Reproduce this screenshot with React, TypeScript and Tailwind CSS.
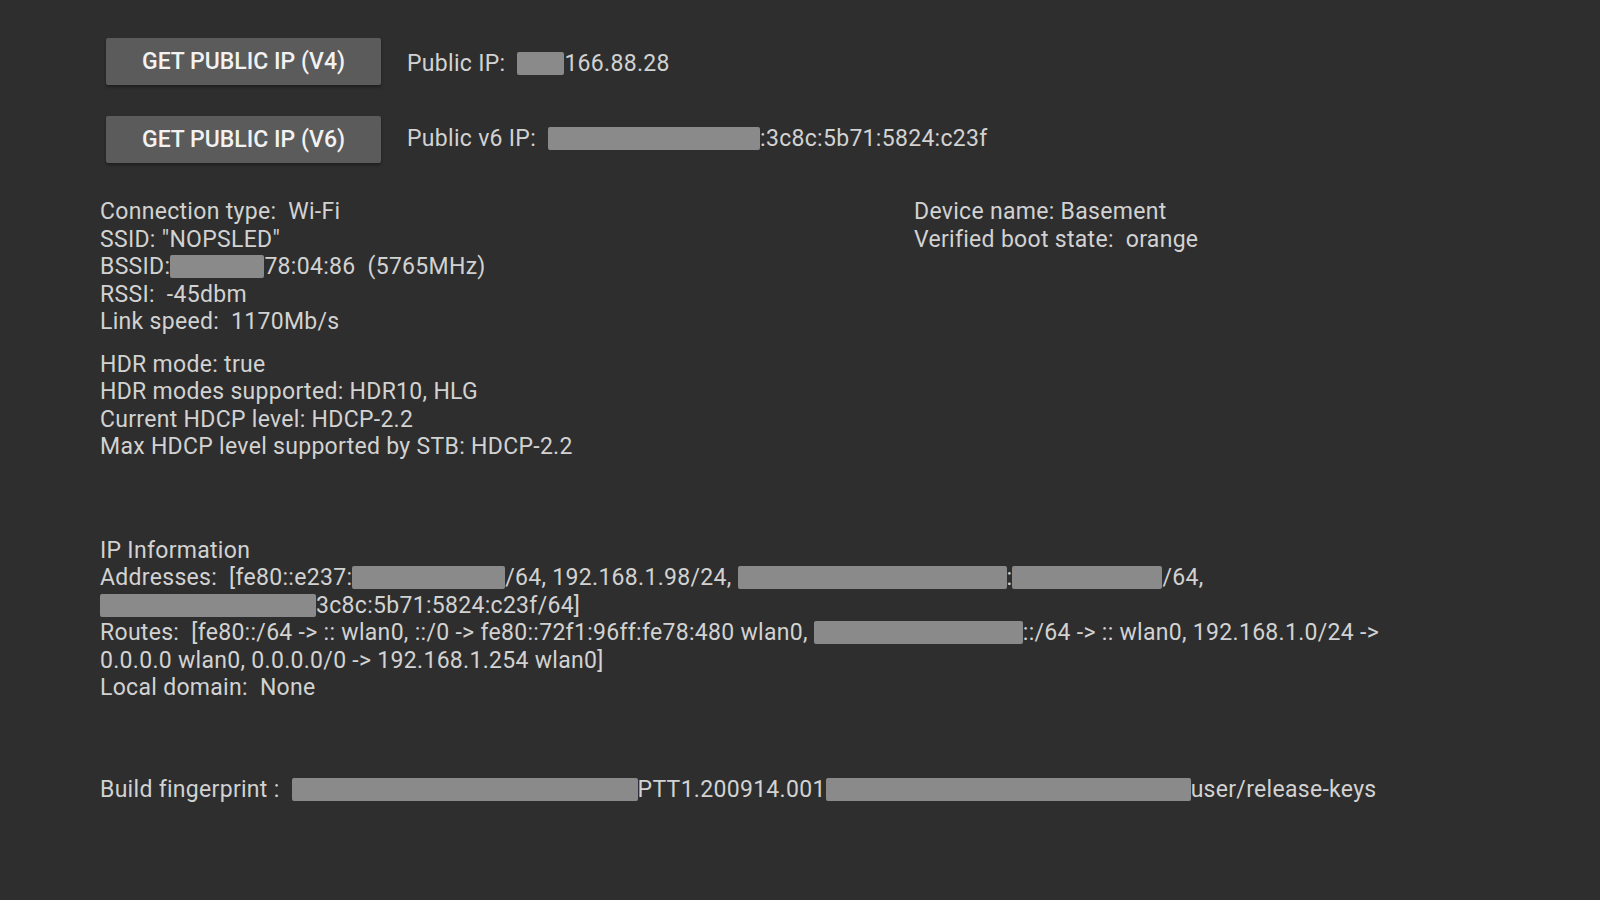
const font = { fontFamily: 'Roboto, "Liberation Sans", sans-serif' };

function Blank({ w }: { w: number }) {
  return (
    <span
      className="inline-block h-[23px] rounded-[2px] bg-[#8a8a8a] align-middle"
      style={{ width: w }}
    />
  );
}

function IpButton({ label }: { label: string }) {
  return (
    <button className="ml-[6px] h-[47px] w-[275px] shrink-0 rounded-[2px] bg-[#5b5b5b] text-[23px] font-medium tracking-normal text-[#f2f2f2] shadow-[0_2px_3px_rgba(0,0,0,0.35)]">
      {label}
    </button>
  );
}

export default function App() {
  return (
    <div
      className="min-h-[900px] w-full bg-[#2e2e2e] pl-[100px] pt-[38px] text-[23px] leading-[27.5px] tracking-[0.3px] text-[#d2d2d2]"
      style={font}
    >
      {/* public ip buttons */}
      <div className="flex flex-col gap-[31px]">
        <div className="flex items-center gap-[26px]">
          <IpButton label="GET PUBLIC IP (V4)" />
          <div className="mt-[4px] flex items-center whitespace-pre">
            <span>Public IP:  </span>
            <Blank w={47} />
            <span>166.88.28</span>
          </div>
        </div>
        <div className="flex items-start gap-[26px]">
          <IpButton label="GET PUBLIC IP (V6)" />
          <div className="mt-[9px] flex items-center whitespace-pre">
            <span>Public v6 IP:  </span>
            <Blank w={212} />
            <span>:3c8c:5b71:5824:c23f</span>
          </div>
        </div>
      </div>

      {/* connection / device */}
      <div className="mt-[35px] grid grid-cols-[814px_1fr] whitespace-pre">
        <div>
          <div>Connection type:  Wi-Fi</div>
          <div>SSID: "NOPSLED"</div>
          <div className="flex items-center">
            <span>BSSID:</span>
            <Blank w={94} />
            <span>78:04:86  (5765MHz)</span>
          </div>
          <div>RSSI:  -45dbm</div>
          <div>Link speed:  1170Mb/s</div>
          <div className="mt-[15px]">
            <div>HDR mode: true</div>
            <div>HDR modes supported: HDR10, HLG</div>
            <div>Current HDCP level: HDCP-2.2</div>
            <div>Max HDCP level supported by STB: HDCP-2.2</div>
          </div>
        </div>
        <div>
          <div>Device name: Basement</div>
          <div>Verified boot state:  orange</div>
        </div>
      </div>

      {/* ip information */}
      <div className="mt-[76px] whitespace-pre">
        <div>IP Information</div>
        <div className="flex items-center">
          <span>Addresses:  [fe80::e237:</span>
          <Blank w={153} />
          <span>/64, 192.168.1.98/24, </span>
          <Blank w={269} />
          <span>:</span>
          <Blank w={150} />
          <span>/64,</span>
        </div>
        <div className="flex items-center">
          <Blank w={216} />
          <span>3c8c:5b71:5824:c23f/64]</span>
        </div>
        <div className="flex items-center">
          <span>Routes:  [fe80::/64 -&gt; :: wlan0, ::/0 -&gt; fe80::72f1:96ff:fe78:480 wlan0, </span>
          <Blank w={209} />
          <span>::/64 -&gt; :: wlan0, 192.168.1.0/24 -&gt;</span>
        </div>
        <div>0.0.0.0 wlan0, 0.0.0.0/0 -&gt; 192.168.1.254 wlan0]</div>
        <div>Local domain:  None</div>
      </div>

      {/* build */}
      <div className="mt-[74px] flex items-center whitespace-pre pb-[40px]">
        <span>Build fingerprint :  </span>
        <Blank w={346} />
        <span>PTT1.200914.001</span>
        <Blank w={365} />
        <span>user/release-keys</span>
      </div>
    </div>
  );
}
